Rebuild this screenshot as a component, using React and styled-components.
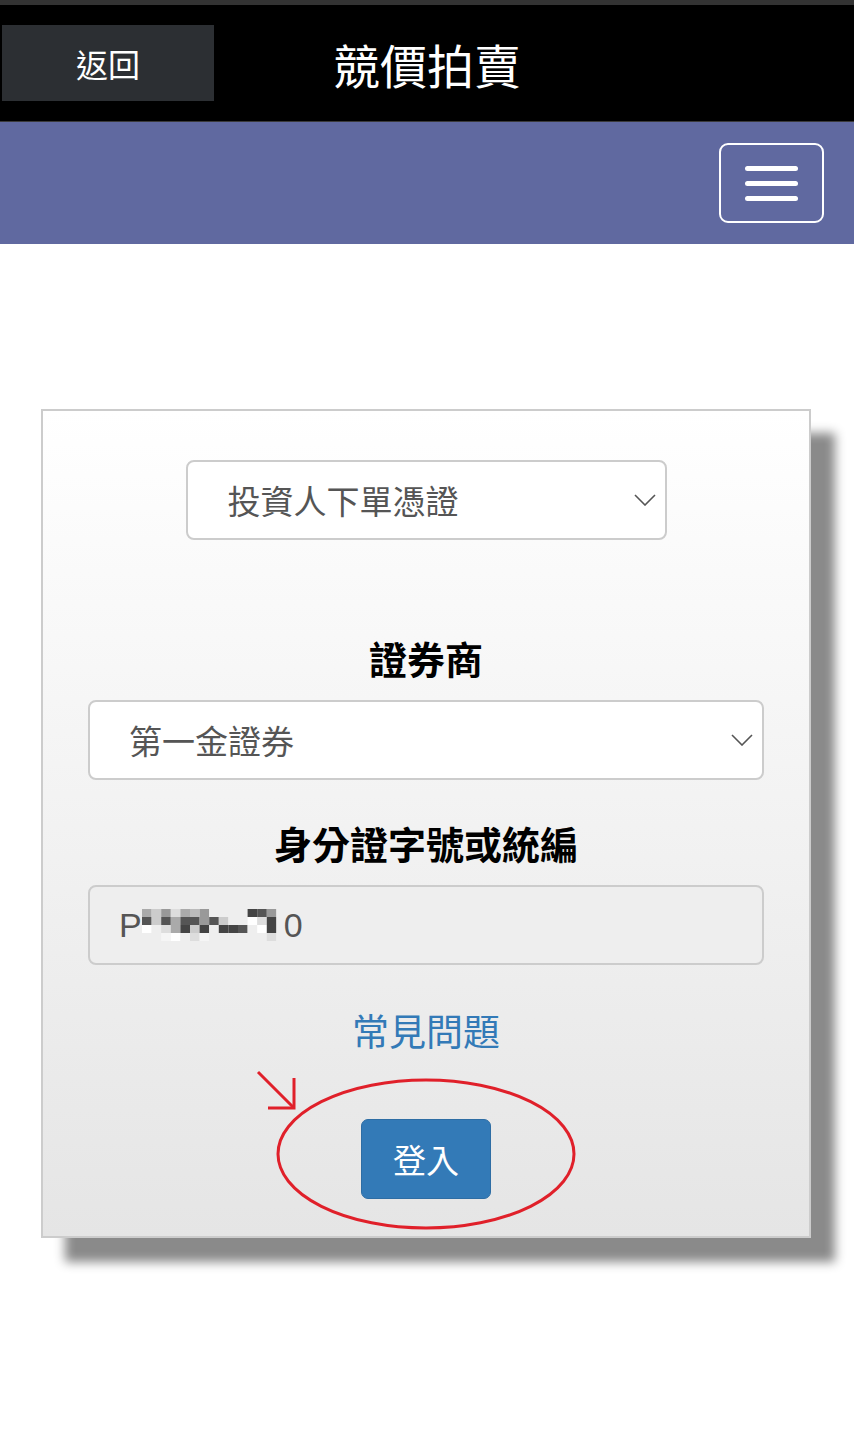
import React from "react";
import styled, { createGlobalStyle } from "styled-components";

const GlobalStyle = createGlobalStyle`
  html, body {
    margin: 0;
    padding: 0;
    background: #fff;
    font-family: "Noto Sans CJK TC", "Noto Sans", sans-serif;
  }
`;

const Strip = styled.div`
  height: 5px;
  background-color: #333;
`;

const Header = styled.header`
  height: 116px;
  background-color: #000;
  display: grid;
  grid-template-columns: 1fr auto 1fr;
  align-items: center;
`;

const BackButton = styled.button`
  justify-self: start;
  margin-left: 2px;
  width: 212px;
  height: 76px;
  border: none;
  background-color: #2c2f33;
  color: #fff;
  font-family: inherit;
  font-size: 32px;
  cursor: pointer;
`;

const Title = styled.h1`
  margin: 0;
  color: #fff;
  font-size: 47px;
  font-weight: 400;
  line-height: 1;
`;

const NavBar = styled.nav`
  border-top: 1px solid #3a3a3a;
  height: 122px;
  background-color: #6069a0;
  display: flex;
  justify-content: flex-end;
  align-items: center;
  padding-right: 30px;
`;

const Toggle = styled.button`
  width: 105px;
  height: 80px;
  border: 2px solid #fff;
  border-radius: 9px;
  background: transparent;
  display: flex;
  flex-direction: column;
  justify-content: center;
  align-items: center;
  gap: 10px;
  padding: 0;
  cursor: pointer;
`;

const Bar = styled.span`
  display: block;
  width: 53px;
  height: 5px;
  border-radius: 3px;
  background-color: #fff;
`;

const Card = styled.section`
  margin: 165px 0 200px 41px;
  width: 770px;
  box-sizing: border-box;
  border: 2px solid #ccc;
  background: linear-gradient(to bottom, #ffffff 0%, #f6f6f6 35%, #e5e5e5 100%);
  box-shadow: 24px 24px 10px #8a8a8a;
  padding: 49px 45px 37px;
  display: flex;
  flex-direction: column;
  align-items: center;
`;

const Select = styled.div`
  width: ${(p) => p.$width || "100%"};
  height: 80px;
  box-sizing: border-box;
  border: 2px solid #ccc;
  border-radius: 8px;
  background-color: #fff;
  display: flex;
  align-items: center;
  justify-content: space-between;
  padding: 0 9px 0 ${(p) => p.$indent || "39px"};
  color: #555;
  font-size: 33px;
`;

const Label = styled.h2`
  margin: ${(p) => p.$top} 0 21px;
  font-size: 38px;
  font-weight: 700;
  line-height: 42px;
  color: #000;
`;

const Field = styled.div`
  width: 100%;
  height: 80px;
  box-sizing: border-box;
  border: 2px solid #ccc;
  border-radius: 8px;
  background-color: #eee;
  display: flex;
  align-items: center;
  padding-left: 29px;
  color: #555;
  font-family: "Liberation Sans", Arial, sans-serif;
  font-size: 34px;
`;

const Help = styled.a`
  margin-top: 40px;
  font-size: 37px;
  line-height: 50px;
  color: #337ab7;
  text-decoration: none;
`;

const ButtonRow = styled.div`
  position: relative;
  margin-top: 64px;
  display: flex;
  justify-content: center;
`;

const LoginButton = styled.button`
  width: 130px;
  height: 80px;
  border: 1px solid #2e6da4;
  border-radius: 7px;
  background-color: #337ab7;
  color: #fff;
  font-family: inherit;
  font-size: 33px;
  cursor: pointer;
`;

const Mark = styled.svg`
  position: absolute;
  left: calc(50% - 170px);
  top: -50px;
  pointer-events: none;
  overflow: visible;
`;

const Chevron = () => (
  <svg width="22" height="12" viewBox="0 0 22 12">
    <polyline points="1,1 11,11 21,1" fill="none" stroke="#555" strokeWidth="1.6" />
  </svg>
);

const mosaic = [
  ["#aaa", "#ccc", "#999", "#ddd", "#aaa", "#bbb", "#999", "#eee", "#eee", "#eee", "#eee", "#444", "#555", "#999", "#eee"],
  ["#555", "#ccc", "#555", "#aaa", "#555", "#555", "#999", "#555", "#ccc", "#eee", "#eee", "#fff", "#ddd", "#444", "#eee"],
  ["#fff", "#eee", "#ddd", "#aaa", "#444", "#ccc", "#444", "#eee", "#444", "#444", "#555", "#eee", "#fff", "#444", "#eee"],
  ["#eee", "#eee", "#f5f5f5", "#fff", "#eee", "#ddd", "#f5f5f5", "#eee", "#eee", "#eee", "#eee", "#eee", "#eee", "#ddd", "#eee"],
];

const Mosaic = () => (
  <svg width="144" height="32" viewBox="0 0 144 32" style={{ margin: "0 -2px 0 0" }}>
    {mosaic.map((row, r) =>
      row.map((c, i) => (
        <rect key={`${r}-${i}`} x={i * 9.6} y={r * 8} width="9.6" height="8" fill={c} />
      ))
    )}
  </svg>
);

const App = () => (
  <>
    <GlobalStyle />
    <Strip />
    <Header>
      <BackButton>返回</BackButton>
      <Title>競價拍賣</Title>
      <span />
    </Header>
    <NavBar>
      <Toggle aria-label="menu">
        <Bar />
        <Bar />
        <Bar />
      </Toggle>
    </NavBar>
    <Card>
      <Select $width="481px" $indent="40px">
        <span>投資人下單憑證</span>
        <Chevron />
      </Select>
      <Label $top="97px">證券商</Label>
      <Select>
        <span>第一金證券</span>
        <Chevron />
      </Select>
      <Label $top="42px">身分證字號或統編</Label>
      <Field>
        <span>P</span>
        <Mosaic />
        <span>0</span>
      </Field>
      <Help href="#">常見問題</Help>
      <ButtonRow>
        <LoginButton>登入</LoginButton>
        <Mark width="340" height="170" viewBox="0 0 340 170">
          <ellipse cx="170" cy="85" rx="148" ry="74" fill="none" stroke="#e0202a" strokeWidth="3" />
          <line x1="2" y1="3" x2="37" y2="38" stroke="#e0202a" strokeWidth="3" />
          <polyline points="12,39 38,39 38,9" fill="none" stroke="#e0202a" strokeWidth="3" />
        </Mark>
      </ButtonRow>
    </Card>
  </>
);

export default App;
